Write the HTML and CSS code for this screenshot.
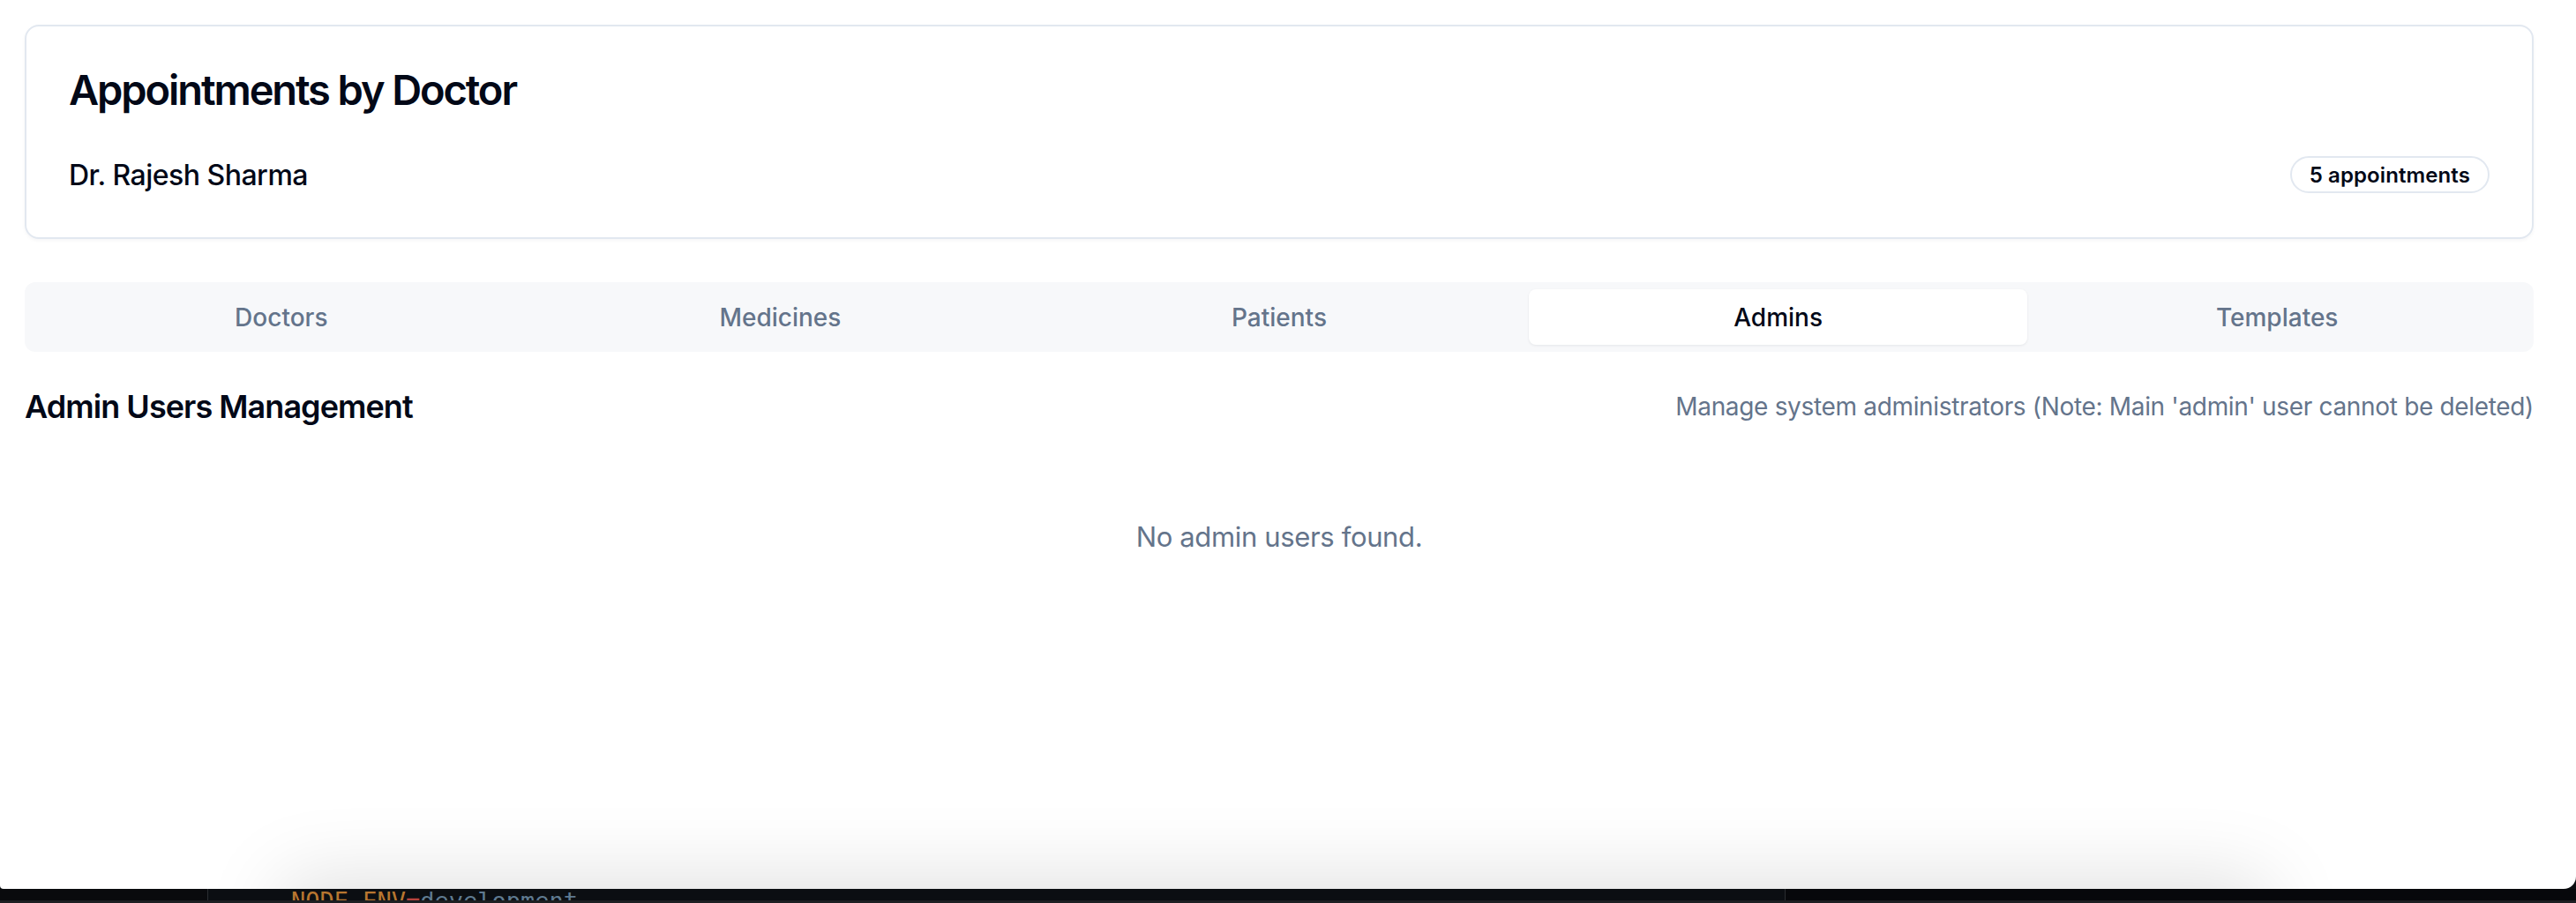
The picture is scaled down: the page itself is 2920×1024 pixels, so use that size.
FILE: index.html
```html
<!DOCTYPE html>
<html lang="en">
<head>
<meta charset="utf-8">
<title>Admin</title>
<link rel="stylesheet" href="styles.css">
</head>
<body>
<div class="screen">
  <div class="browser">
    <main class="page">
      <section class="card">
        <h2 class="card-title">Appointments by Doctor</h2>
        <div class="doctor-row">
          <span class="doctor-name">Dr. Rajesh Sharma</span>
          <span class="badge">5 appointments</span>
        </div>
      </section>
      <nav class="tabs">
        <button class="tab">Doctors</button>
        <button class="tab">Medicines</button>
        <button class="tab">Patients</button>
        <button class="tab active">Admins</button>
        <button class="tab">Templates</button>
      </nav>
      <section class="panel">
        <div class="panel-head">
          <h3 class="panel-title">Admin Users Management</h3>
          <p class="panel-desc">Manage system administrators (Note: Main 'admin' user cannot be deleted)</p>
        </div>
        <p class="empty">No admin users found.</p>
      </section>
    </main>
    <div class="cast-shadow"></div>
  </div>
  <div class="terminal">
    <div class="pane pane-left"></div>
    <div class="pane pane-main"><span class="t-key">NODE_ENV</span><span class="t-eq">=</span><span class="t-val">development</span></div>
    <div class="pane pane-right"></div>
  </div>
</div>
</body>
</html>
```
FILE: styles.css
```css
* { box-sizing: border-box; }
html, body { margin: 0; padding: 0; }
body {
  background: #0b0d10;
  font-family: Inter, "Noto Sans", "Liberation Sans", sans-serif;
  color: #020817;
  width: 2920px;
  height: 1024px;
  overflow: hidden;
}
.screen { display: flex; flex-direction: column; height: 1024px; }
.browser {
  position: relative;
  height: 1008px;
  background: #ffffff;
  overflow: hidden;
  border-bottom-right-radius: 14px;
  border-bottom-left-radius: 4px;
}
.page { padding: 28px 48px 0 28px; }

.card {
  border: 2px solid #e2e8f0;
  border-radius: 16px;
  background: #fff;
  box-shadow: 0 2px 4px rgba(15, 23, 42, 0.04);
  padding: 48px 48px 50px 48px;
}
.card-title {
  margin: 0;
  font-size: 47px;
  line-height: 48px;
  font-weight: 600;
  letter-spacing: -2.1px;
}
.doctor-row {
  margin-top: 51px;
  height: 42px;
  display: flex;
  align-items: center;
  justify-content: space-between;
}
.doctor-name { font-size: 32px; font-weight: 500; letter-spacing: -0.5px; }
.badge {
  height: 42px;
  display: inline-flex;
  align-items: center;
  padding: 0 20px;
  border: 2px solid #e2e8f0;
  border-radius: 999px;
  font-size: 24px;
  font-weight: 600;
  letter-spacing: 0.1px;
}

.tabs {
  margin-top: 49px;
  height: 79px;
  padding: 8px;
  background: #f7f8fa;
  border-radius: 12px;
  display: grid;
  grid-template-columns: repeat(5, 1fr);
}
.tab {
  border: 0;
  background: transparent;
  font-family: inherit;
  font-size: 28px;
  font-weight: 500;
  color: #64748b;
  border-radius: 8px;
  padding: 0;
}
.tab.active {
  background: #fff;
  color: #020817;
  box-shadow: 0 1px 3px rgba(15, 23, 42, 0.08);
}

.panel { margin-top: 34px; }
.panel-head {
  height: 56px;
  display: flex;
  align-items: center;
  justify-content: space-between;
}
.panel-title { margin: 0; font-size: 36px; font-weight: 600; letter-spacing: -0.95px; }
.panel-desc { margin: 0; font-size: 28px; color: #64748b; letter-spacing: -0.33px; }
.empty {
  margin: 96px 0 0;
  text-align: center;
  font-size: 31px;
  line-height: 48px;
  color: #64748b;
  letter-spacing: -0.35px;
}

.cast-shadow {
  position: absolute;
  left: 330px;
  right: 360px;
  top: 1008px;
  height: 120px;
  box-shadow: 0 0 90px 10px rgba(0, 0, 0, 0.13);
}

.terminal {
  height: 16px;
  display: flex;
  background: #0b0e12;
  border-bottom: 3px solid #1d1f22;
}
.pane { height: 100%; overflow: hidden; }
.pane-left { width: 236px; background: #090a0d; border-right: 1px solid #2a2d31; }
.pane-main {
  width: 1788px;
  border-right: 1px solid #2a2d31;
  padding-left: 94px;
  font-family: "DejaVu Sans Mono", "Liberation Mono", monospace;
  font-size: 27px;
  line-height: 27px;
  white-space: nowrap;
}
.pane-main span { display: inline-block; margin-top: -12px; }
.pane-right { flex: 1; background: #07080b; }
.t-key { color: #b87630; }
.t-eq { color: #b8433d; }
.t-val { color: #5f7a90; }
```
